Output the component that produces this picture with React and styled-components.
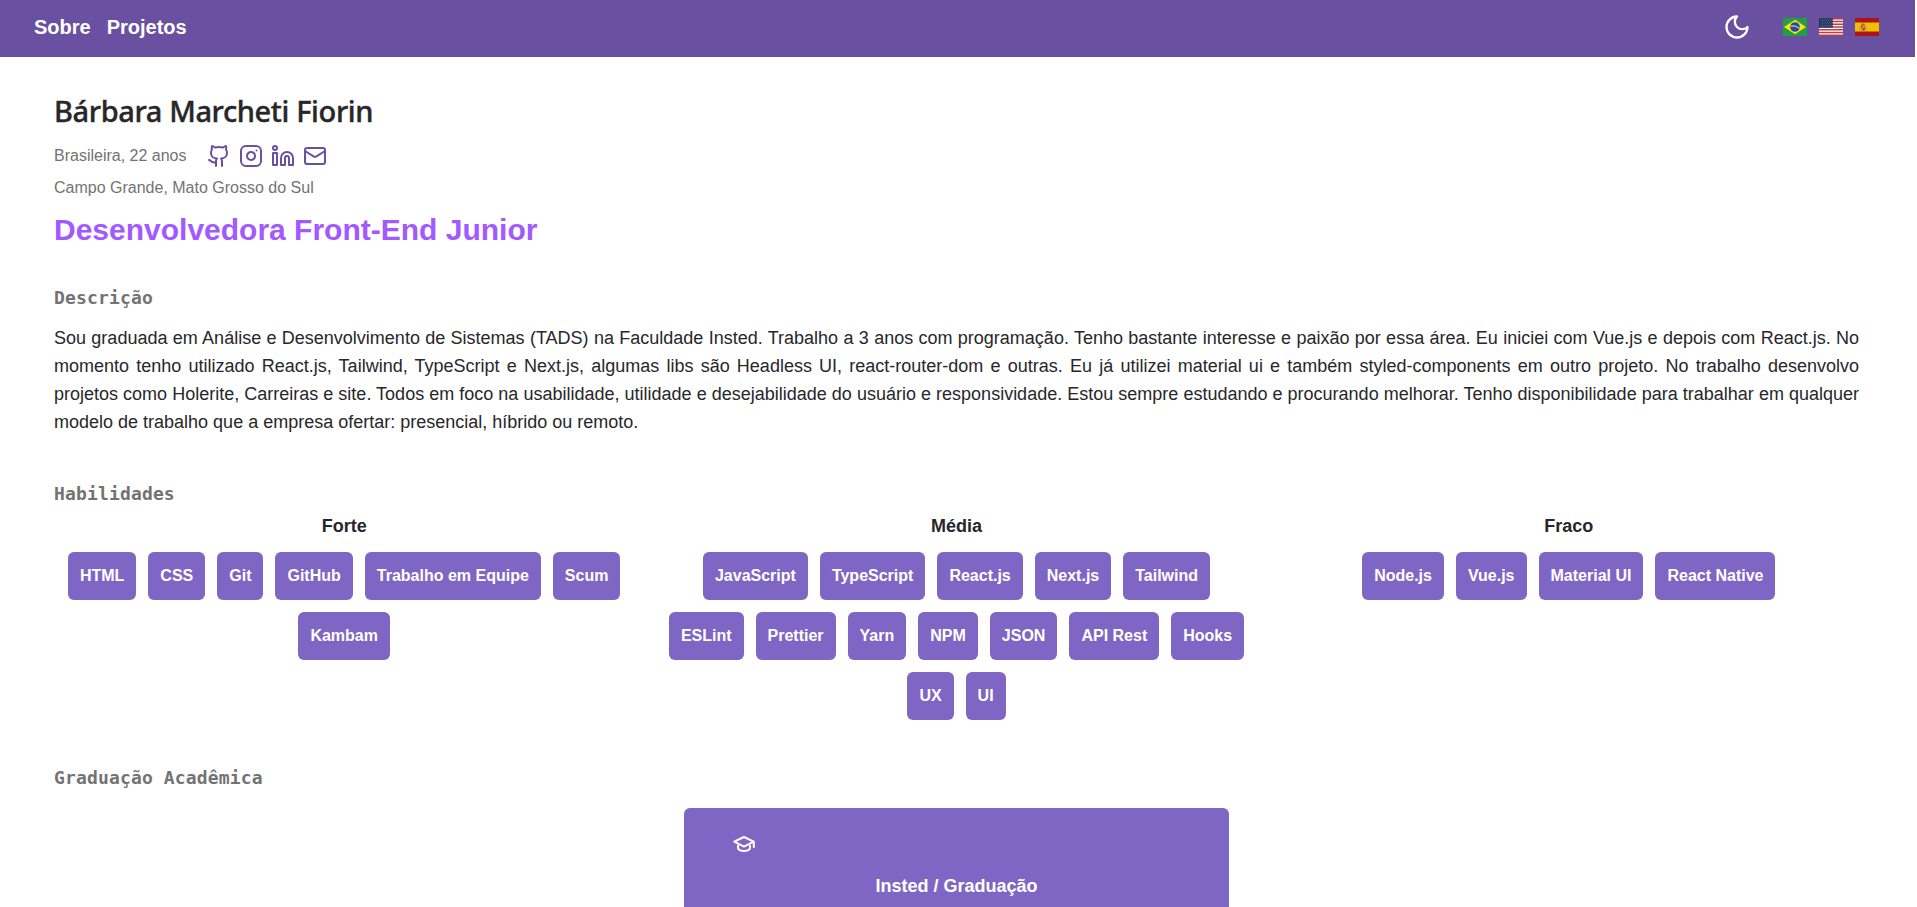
import React from "react";
import styled, { createGlobalStyle } from "styled-components";
import { LuGithub, LuInstagram, LuLinkedin, LuMail } from "react-icons/lu";

const Global = createGlobalStyle`
  * { box-sizing: border-box; }
  html { overflow: hidden; }
  body { margin: 0; background: #fff; color: #27272a; font-family: "Liberation Sans", Arial, sans-serif; height: 907px; overflow: hidden; }
  h1, h2, h3, h4, p { margin: 0; padding: 0; }
`;

const Page = styled.div`
  height: 907px;
  overflow: hidden;
`;
const Header = styled.header`
  width: 1915px;
  height: 57px;
  padding: 0 36px 3px 34px;
  display: flex;
  justify-content: space-between;
  align-items: center;
  background: #6950a1;
`;
const Nav = styled.nav`
  display: flex;
  gap: 16px;
`;
const NavLink = styled.a`
  color: #fff;
  font-size: 20px;
  line-height: 28px;
  font-weight: 700;
`;
const Tools = styled.div`
  display: flex;
  align-items: center;
  color: #fff;
`;
const Flags = styled.div`
  display: flex;
  gap: 12px;
  margin-left: 32px;
`;
const Main = styled.main`
  padding: 34px 58px 0 54px;
`;
const Name = styled.h1`
  font-family: "Segoe UI", "Noto Sans", sans-serif;
  font-size: 29px;
  font-weight: 500;
  line-height: 40px;
  letter-spacing: -0.38px;
  -webkit-text-stroke: 0.4px currentColor;
`;
const Row = styled.div`
  display: flex;
  align-items: center;
  height: 32px;
  margin-top: 9px;
`;
const Muted = styled.p`
  font-size: 16px;
  line-height: 32px;
  color: #737373;
`;
const Socials = styled.div`
  display: flex;
  gap: 8px;
  margin-left: 20px;
  color: #6950a1;
`;
const Role = styled.h2`
  font-size: 30px;
  line-height: 36px;
  margin-top: 8px;
  color: #a259ff;
`;
const SectionTitle = styled.h3`
  font-family: Consolas, "DejaVu Sans Mono", monospace;
  font-size: 18px;
  line-height: 28px;
  letter-spacing: 0.15px;
  color: #737373;
  margin-top: ${(p) => p.$top}px;
`;
const Text = styled.p`
  font-size: 18px;
  line-height: 28px;
  margin-top: 12px;
  text-align: justify;
`;
const Skills = styled.div`
  display: grid;
  grid-template-columns: repeat(3, 1fr);
  column-gap: 32px;
`;
const Level = styled.h4`
  font-size: 18px;
  line-height: 28px;
  text-align: center;
  margin: 4px 0 12px;
`;
const Tags = styled.div`
  display: flex;
  flex-wrap: wrap;
  justify-content: center;
  gap: 12px;
`;
const Tag = styled.span`
  height: 48px;
  padding: 0 12px;
  border-radius: 6px;
  background: #8066c4;
  color: #fff;
  font-size: 16px;
  font-weight: 700;
  line-height: 48px;
`;
const Card = styled.article`
  width: 545px;
  height: 240px;
  margin: 16px auto 0;
  padding: 24px 48px;
  border-radius: 6px;
  background: #8066c4;
  color: #fff;
`;
const CardTitle = styled.h4`
  font-size: 18px;
  line-height: 28px;
  text-align: center;
  margin-top: 16px;
`;
const Icon = styled.svg`
  display: block;
  fill: none;
  stroke: currentColor;
  stroke-width: 2;
  stroke-linecap: round;
  stroke-linejoin: round;
`;
const Flag = styled.svg.attrs({ width: 24, height: 18, viewBox: "0 0 24 18" })`
  display: block;
`;

const Moon = () => (
  <Icon width="28" height="28" viewBox="0 0 24 24">
    <path d="M12 3a6 6 0 0 0 9 9 9 9 0 1 1-9-9Z" />
  </Icon>
);
const GraduationCap = () => (
  <Icon width="24" height="24" viewBox="0 0 24 24">
    <path d="M12 5 2.2 9.7 12 14.6l9.8-4.9zM21.8 9.7V15M6 11.8V16c0 1.6 2.6 3 6 3s6-1.4 6-3v-4.2" />
  </Icon>
);
const Brazil = () => (
  <Flag>
    <path fill="#229e45" d="M0 0h24v18H0z" />
    <path fill="#f8e509" d="M12 1.8 23 9l-11 7.2L1 9z" />
    <circle cx="12" cy="9" r="4.8" fill="#2b49a3" />
    <path d="M7.6 8q5-1 8.8 2.3" fill="none" stroke="#fff" strokeWidth=".9" />
  </Flag>
);
const Usa = () => (
  <Flag>
    <path fill="#fff" d="M0 0h24v18H0z" />
    <path
      stroke="#bd3d44"
      strokeWidth="1.38"
      d="M0 .7h24M0 3.46h24M0 6.23h24M0 9h24M0 11.77h24M0 14.54h24M0 17.3h24"
    />
    <path fill="#192f5d" d="M0 0h13.7v9.7H0z" />
    <path
      stroke="#fff"
      strokeOpacity=".5"
      strokeWidth=".8"
      strokeDasharray=".9 1.4"
      d="M.8 1h12.4M2 2.6h11M.8 4.2h12.4M2 5.8h11M.8 7.4h12.4M2 8.8h11"
    />
  </Flag>
);
const Spain = () => (
  <Flag>
    <path fill="#aa151b" d="M0 0h24v18H0z" />
    <path fill="#f1bf00" d="M0 4.5h24v9H0z" />
    <path fill="#ad1519" fillOpacity=".8" d="M6 7.6h4v3.8q-2 2.2-4 0z" />
    <path fill="#d9b5a0" d="M6.4 9.6H8v1.6H6.4zM8 8h1.6v1.5H8z" />
    <path fill="#a59a86" d="M4.4 7.6h1v5h-1zM10.4 7.6h1v5h-1z" />
    <path fill="#b0602a" d="M6.4 5.6h3.2V7H6.4z" />
  </Flag>
);

const skills = [
  ["Forte", ["HTML", "CSS", "Git", "GitHub", "Trabalho em Equipe", "Scum", "Kambam"]],
  [
    "Média",
    [
      "JavaScript", "TypeScript", "React.js", "Next.js", "Tailwind", "ESLint", "Prettier",
      "Yarn", "NPM", "JSON", "API Rest", "Hooks", "UX", "UI",
    ],
  ],
  ["Fraco", ["Node.js", "Vue.js", "Material UI", "React Native"]],
];

export default function App() {
  return (
    <Page>
      <Global />
      <Header>
        <Nav>
          <NavLink>Sobre</NavLink>
          <NavLink>Projetos</NavLink>
        </Nav>
        <Tools>
          <Moon />
          <Flags>
            <Brazil />
            <Usa />
            <Spain />
          </Flags>
        </Tools>
      </Header>
      <Main>
        <Name>Bárbara Marcheti Fiorin</Name>
        <Row>
          <Muted>Brasileira, 22 anos</Muted>
          <Socials>
            <LuGithub size={24} />
            <LuInstagram size={24} />
            <LuLinkedin size={24} />
            <LuMail size={24} />
          </Socials>
        </Row>
        <Muted>Campo Grande, Mato Grosso do Sul</Muted>
        <Role>Desenvolvedora Front-End Junior</Role>
        <SectionTitle $top={36}>Descrição</SectionTitle>
        <Text>
          Sou graduada em Análise e Desenvolvimento de Sistemas (TADS) na Faculdade Insted. Trabalho a 3 anos com
          programação. Tenho bastante interesse e paixão por essa área. Eu iniciei com Vue.js e depois com React.js. No
          momento tenho utilizado React.js, Tailwind, TypeScript e Next.js, algumas libs são Headless UI,
          react-router-dom e outras. Eu já utilizei material ui e também styled-components em outro projeto. No trabalho
          desenvolvo projetos como Holerite, Carreiras e site. Todos em foco na usabilidade, utilidade e desejabilidade
          do usuário e responsividade. Estou sempre estudando e procurando melhorar. Tenho disponibilidade para
          trabalhar em qualquer modelo de trabalho que a empresa ofertar: presencial, híbrido ou remoto.
        </Text>
        <SectionTitle $top={44}>Habilidades</SectionTitle>
        <Skills>
          {skills.map(([level, names]) => (
            <section key={level}>
              <Level>{level}</Level>
              <Tags>
                {names.map((n) => (
                  <Tag key={n}>{n}</Tag>
                ))}
              </Tags>
            </section>
          ))}
        </Skills>
        <SectionTitle $top={44}>Graduação Acadêmica</SectionTitle>
        <Card>
          <GraduationCap />
          <CardTitle>Insted / Graduação</CardTitle>
        </Card>
      </Main>
    </Page>
  );
}
